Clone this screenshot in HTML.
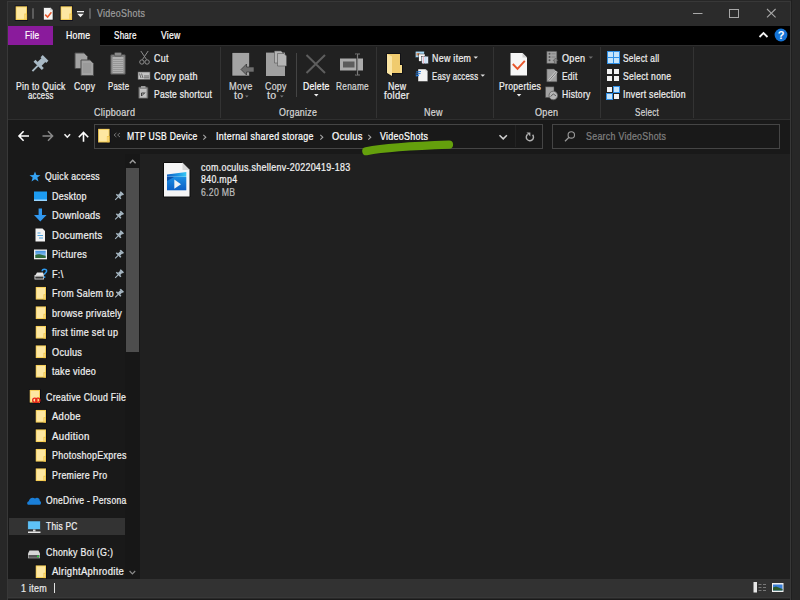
<!DOCTYPE html>
<html><head><meta charset="utf-8">
<style>
*{margin:0;padding:0;box-sizing:border-box}
html,body{width:800px;height:600px;overflow:hidden;background:#272727;font-family:"Liberation Sans",sans-serif}
.a{position:absolute}
.t{position:absolute;font-size:11px;line-height:11px;white-space:nowrap;transform-origin:0 0;-webkit-text-stroke:0.25px currentColor;letter-spacing:0.35px}
svg{position:absolute;overflow:visible}
</style></head><body>
<!-- window frame -->
<div class="a" style="left:7px;top:1px;width:784px;height:610px;background:#383838"></div>
<!-- title bar -->
<div class="a" style="left:8px;top:2px;width:782px;height:24px;background:#2b2b2b"></div>
<!-- tab strip -->
<div class="a" style="left:8px;top:26px;width:782px;height:19px;background:#000"></div>
<div class="a" style="left:8px;top:26px;width:45px;height:19px;background:#8a1b9c"></div>
<div class="a" style="left:53px;top:26px;width:47px;height:20px;background:#212121"></div>
<!-- ribbon -->
<div class="a" style="left:8px;top:45px;width:782px;height:75px;background:#212121"></div>
<div class="a" style="left:100px;top:45px;width:690px;height:1px;background:#2e2e2e"></div>
<div class="a" style="left:8px;top:119px;width:782px;height:1px;background:#2f2f2f"></div>
<!-- group separators -->
<div class="a" style="left:220px;top:47px;width:1px;height:71px;background:#333"></div>
<div class="a" style="left:376px;top:47px;width:1px;height:71px;background:#333"></div>
<div class="a" style="left:493px;top:47px;width:1px;height:71px;background:#333"></div>
<div class="a" style="left:600px;top:47px;width:1px;height:71px;background:#333"></div>
<div class="a" style="left:693px;top:47px;width:1px;height:71px;background:#333"></div>
<div class="a" style="left:296px;top:53px;width:1px;height:44px;background:#444"></div>
<!-- address row -->
<div class="a" style="left:8px;top:120px;width:782px;height:34px;background:#191919"></div>
<div class="a" style="left:94px;top:124px;width:449px;height:25px;border:1px solid #454545;background:#191919"></div>
<div class="a" style="left:515px;top:125px;width:1px;height:22px;background:#232323"></div>
<div class="a" style="left:552px;top:124px;width:228px;height:25px;border:1px solid #454545;background:#191919"></div>
<!-- nav pane -->
<div class="a" style="left:8px;top:154px;width:132px;height:425px;background:#191919"></div>
<div class="a" style="left:125px;top:154px;width:15px;height:425px;background:#171717"></div>
<div class="a" style="left:126px;top:168px;width:13px;height:184px;background:#4d4d4d"></div>
<div class="a" style="left:9px;top:518px;width:116px;height:17px;background:#333"></div>
<!-- content -->
<div class="a" style="left:140px;top:154px;width:650px;height:425px;background:#202020"></div>
<!-- status -->
<div class="a" style="left:8px;top:579px;width:782px;height:18px;background:#323232"></div>
<div class="a" style="left:8px;top:597px;width:782px;height:1px;background:#383838"></div><div class="a" style="left:8px;top:598px;width:782px;height:1px;background:#282828"></div><div class="a" style="left:8px;top:599px;width:782px;height:1px;background:#1a1a1a"></div>
<div class="a" style="left:54px;top:583px;width:1px;height:10px;background:#e0e0e0"></div>
<div class="a" style="left:791px;top:0px;width:1px;height:600px;background:#1f1f1f"></div>

<svg class="a" style="left:0;top:0" width="800" height="600" viewBox="0 0 800 600">
<defs>
<g id="fold">
 <rect x="-0.2" y="-0.5" width="13.1" height="15.3" fill="#0b0b1c"/>
 <rect x="0.6" y="0.3" width="11.5" height="13.7" fill="#f5cf55"/>
 <rect x="1.5" y="1.3" width="9.6" height="11.6" fill="#fde7a2"/>
 <rect x="9.4" y="7.6" width="2.7" height="6.1" fill="#efc246"/>
 <rect x="9.7" y="8.4" width="1.7" height="4.4" fill="#f8d878"/>
</g>
<g id="nfold">
 <rect x="0.4" y="-1.4" width="11.9" height="14.3" fill="#0b0b16"/>
 <rect x="1.2" y="-0.6" width="10.3" height="12.7" fill="#f5cf55"/>
 <rect x="2.1" y="0.4" width="8.4" height="10.6" fill="#fde7a2"/>
 <rect x="9" y="6.8" width="2.5" height="5.3" fill="#efc246"/>
 <rect x="9.3" y="7.6" width="1.5" height="3.6" fill="#f8d878"/>
</g>
<g id="pin">
 <g transform="rotate(45)">
  <rect x="-2.6" y="-6" width="5.2" height="2" fill="#a9bac6"/>
  <rect x="-1.8" y="-4.2" width="3.6" height="4" fill="#a9bac6"/>
  <rect x="-3.8" y="-0.6" width="7.6" height="1.8" fill="#a9bac6"/>
  <rect x="-0.6" y="1" width="1.2" height="5" fill="#a9bac6"/>
 </g>
</g>
</defs>
<!-- title bar -->
<use href="#fold" x="15" y="6"/>
<rect x="32" y="8" width="2" height="11" rx="1" fill="#5c5c5c"/>
<path d="M43.5 7.5 H50.5 L53 10 V20 H43.5 Z" fill="#f4f4f4" stroke="#151515" stroke-width="0.6"/>
<path d="M50.2 7.5 V10.3 H53" fill="#c8c8c8"/>
<path d="M45.2 14.6 L47.6 17 L51.4 12.2" fill="none" stroke="#e8572b" stroke-width="1.5"/>
<use href="#fold" x="60" y="6"/>
<rect x="77" y="11" width="7" height="1.3" fill="#f0f0f0"/>
<path d="M77.3 13.8 H83.7 L80.5 17.2 Z" fill="#f0f0f0"/>
<rect x="89" y="8" width="2" height="11" rx="1" fill="#5c5c5c"/>
<rect x="693" y="13" width="9.5" height="1" fill="#a8a8a8"/>
<rect x="729.5" y="9.5" width="9" height="8" fill="none" stroke="#a8a8a8" stroke-width="1"/>
<path d="M767 9 L775.6 17.4 M775.6 9 L767 17.4" stroke="#a8a8a8" stroke-width="1.05"/>
<!-- tab strip right -->
<path d="M759.5 37 L763.5 33 L767.5 37" fill="none" stroke="#f4f4f4" stroke-width="1.8"/>
<circle cx="781" cy="35" r="6.4" fill="#1473d6"/>
<text x="781" y="39.2" text-anchor="middle" font-family="Liberation Sans" font-weight="bold" font-size="11" fill="#fff">?</text>

<!-- ribbon: pin -->
<use href="#pin" transform="translate(39 64.5) scale(1.55)"/>
<!-- copy -->
<path d="M75 53 H84 L87.5 56.5 V68.5 H75 Z" fill="#a3a3a3" stroke="#4d4d4d" stroke-width="1"/>
<path d="M81 60 H90 L93.5 63.5 V75.5 H81 Z" fill="#a3a3a3" stroke="#4d4d4d" stroke-width="1"/>
<path d="M83 64 H91 M83 66 H91 M83 68 H91 M83 70 H91 M83 72 H91" stroke="#8d8d8d" stroke-width="0.8"/>
<!-- paste -->
<rect x="110.5" y="54.5" width="15" height="20" rx="1.5" fill="#7d7d7d" stroke="#444" stroke-width="1"/>
<rect x="112.5" y="57" width="11" height="16" fill="#b0b0b0"/>
<path d="M113 59.5 H123 M113 61.5 H123 M113 63.5 H123 M113 65.5 H123 M113 67.5 H123 M113 69.5 H123 M113 71.5 H123" stroke="#8f8f8f" stroke-width="0.8"/>
<rect x="114.5" y="52.5" width="7" height="3.5" rx="1" fill="#8a8a8a" stroke="#444" stroke-width="0.6"/>
<!-- cut -->
<path d="M140.8 51 L146.6 59.6 M148.2 51 L142.4 59.6" stroke="#8e8e8e" stroke-width="1" fill="none"/>
<circle cx="141.9" cy="62" r="2.2" fill="none" stroke="#8e8e8e" stroke-width="1"/>
<circle cx="147.1" cy="62" r="2.2" fill="none" stroke="#8e8e8e" stroke-width="1"/>
<!-- copy path -->
<rect x="138" y="72" width="12" height="7.5" fill="#c4c4c4" stroke="#5a5a5a" stroke-width="0.6"/>
<path d="M139.5 73.5 L141 78 M141.5 73.5 L143 78 M144 76 H149 M144 77.8 H149" stroke="#444" stroke-width="0.7"/>
<!-- paste shortcut -->
<rect x="138.5" y="87" width="9.5" height="11.5" rx="1" fill="#8a8a8a" stroke="#444" stroke-width="0.8"/>
<rect x="140" y="89" width="6.5" height="8.5" fill="#c2c2c2"/>
<rect x="141" y="86" width="4.5" height="2.2" fill="#9a9a9a"/>
<path d="M141.5 96 V93 H144.5 M141.8 95.8 L145 92.5" stroke="#333" stroke-width="0.9" fill="none"/>

<!-- move to -->
<rect x="232" y="52.6" width="17.6" height="23.4" fill="#a3a3a3" stroke="#111" stroke-width="0.6"/>
<path d="M241 69.5 L246.5 64 V67 H254 V72 H246.5 V75 Z" fill="#6f6f6f" stroke="#222" stroke-width="0.6"/>
<!-- copy to -->
<path d="M266 52.6 H285 V76 H266 Z" fill="#a0a0a0"/>
<path d="M274.5 51 H281 L283 53 V63 H274.5 Z" fill="#b5b5b5" stroke="#555" stroke-width="0.6"/>
<path d="M277.5 53.5 H284 L286.5 56 V66 H277.5 Z" fill="#b5b5b5" stroke="#555" stroke-width="0.6"/>
<!-- delete X -->
<path d="M306.5 55 L325 73 M325 55 L306.5 73" stroke="#5e5e5e" stroke-width="2"/>
<!-- rename -->
<rect x="340" y="58.5" width="23" height="12" fill="#ababab"/>
<rect x="343" y="61.5" width="11.5" height="6" fill="#5c5c5c"/>
<path d="M357.5 54 V75 M355 54 H360 M355 75 H360" stroke="#7a7a7a" stroke-width="1.2" fill="none"/>
<path d="M356.5 54 V75" stroke="#2a2a2a" stroke-width="0.6"/>

<!-- new folder -->
<path d="M386.3 53.3 H400.7 V64.3 H402.7 V73.7 H392.7 V76.8 L386.3 73.5 Z" fill="#0c0c12"/>
<rect x="387" y="54" width="13" height="19" fill="#f0cb6e"/>
<rect x="400" y="65" width="2" height="8" fill="#f6db8a"/>
<path d="M387 54 L392 56.5 V76 L387 73 Z" fill="#fae4a2"/>
<!-- new item -->
<rect x="415.3" y="51.2" width="9" height="6.3" fill="#a6d6f4" stroke="#111" stroke-width="0.4"/>
<rect x="416.5" y="53" width="3" height="2.5" fill="#d08a5a"/>
<rect x="418.8" y="54" width="6.2" height="7.3" fill="#f6f6f6" stroke="#111" stroke-width="0.4"/>
<rect x="421.7" y="56.2" width="6.7" height="7.6" fill="#d9e6f5" stroke="#111" stroke-width="0.4"/>
<path d="M423.5 56.5 V63.5" stroke="#f0b0c0" stroke-width="0.9"/>
<path d="M425.8 56.5 V63.5" stroke="#b9d6f2" stroke-width="0.9"/>
<!-- easy access -->
<path d="M418 69 H425.5 L427.8 71.3 V81.5 H418 Z" fill="#f3f3f3" stroke="#111" stroke-width="0.4"/>
<path d="M425.5 69 V71.3 H427.8 Z" fill="#cfcfcf"/>
<path d="M416 72 L421 71.5 M415.6 74 L420.5 73.5 M415.8 75.8 L419 75.4" stroke="#2a7bd6" stroke-width="1.2"/>
<!-- dropdown arrows -->
<path d="M473.5 56.5 H478 L475.75 58.8 Z" fill="#e0e0e0"/>
<path d="M480.5 74.5 H485 L482.75 76.8 Z" fill="#e0e0e0"/>
<path d="M588.5 56.5 H593 L590.75 58.8 Z" fill="#6c6c6c"/>
<path d="M314 94 H318.5 L316.25 96.6 Z" fill="#f0f0f0"/>
<path d="M516.8 94 H521.3 L519 96.6 Z" fill="#f0f0f0"/>
<path d="M245 95.5 H248.6 L246.8 97.4 Z" fill="#777"/>
<path d="M280 95.5 H283.6 L281.8 97.4 Z" fill="#777"/>

<!-- properties -->
<path d="M510.5 53 H522.5 L527 57.5 V75.5 H510.5 Z" fill="#f6f6f6"/>
<path d="M522.5 53 V57.5 H527 Z" fill="#cfcfcf"/>
<path d="M512.8 64 L517.5 68.8 L524.8 60.8" fill="none" stroke="#e8552a" stroke-width="1.9"/>
<!-- open -->
<path d="M546.8 51.3 H556.8 V63.4 H546.8 Z" fill="#a2a2a2" stroke="#4a4a4a" stroke-width="0.5"/>
<circle cx="549.5" cy="53.8" r="1" fill="#555"/><circle cx="549.5" cy="57" r="1" fill="#555"/><circle cx="549.5" cy="60.2" r="1" fill="#555"/>
<path d="M551.5 53.8 H555.5 M551.5 57 H555.5" stroke="#7a7a7a" stroke-width="0.8"/>
<path d="M554.5 63.8 V60.8 H553 L555.6 58 L558.2 60.8 H556.7 V63.8 Z" fill="#8a8a8a" stroke="#3a3a3a" stroke-width="0.4"/>
<!-- edit -->
<path d="M546.8 69 H554 L557 72 V81.8 H546.8 Z" fill="#a2a2a2" stroke="#4a4a4a" stroke-width="0.5"/>
<path d="M549 80.5 L556.8 71.5" stroke="#d0d0d0" stroke-width="2.2"/>
<path d="M549 80.5 L556.8 71.5" stroke="#777" stroke-width="1"/>
<!-- history -->
<path d="M545.5 86.8 H554 V97.5 H545.5 Z" fill="#a2a2a2" stroke="#4a4a4a" stroke-width="0.5"/>
<circle cx="553.3" cy="95.5" r="4.3" fill="#b5b5b5" stroke="#5a5a5a" stroke-width="0.8"/>
<path d="M550.5 96.5 L553.3 94 L556 95.8" stroke="#555" stroke-width="0.9" fill="none"/>
<!-- select all -->
<rect x="607" y="51" width="13" height="13" fill="#2f8fe6"/>
<rect x="608" y="52" width="5" height="5" fill="#c5e4fb"/>
<rect x="614" y="52" width="5" height="5" fill="#c5e4fb"/>
<rect x="608" y="58" width="5" height="5" fill="#c5e4fb"/>
<rect x="614" y="58" width="5" height="5" fill="#c5e4fb"/>
<!-- select none -->
<rect x="607" y="69" width="5" height="5" fill="#f2f2f2"/>
<rect x="614" y="69" width="5" height="5" fill="#f2f2f2"/>
<rect x="607" y="76" width="5" height="5" fill="#f2f2f2"/>
<rect x="614" y="76" width="5" height="5" fill="#f2f2f2"/>
<!-- invert -->
<rect x="607" y="87" width="5" height="5" fill="#f2f2f2"/>
<rect x="613" y="86" width="7" height="7" fill="#2f8fe6"/><rect x="614" y="87" width="5" height="5" fill="#c5e4fb"/>
<rect x="606" y="93" width="7" height="7" fill="#2f8fe6"/><rect x="607" y="94" width="5" height="5" fill="#c5e4fb"/>
<rect x="614" y="94" width="5" height="5" fill="#f2f2f2"/>

<!-- address row -->
<path d="M19 136 H29 M23.6 131.3 L19 136 L23.6 140.7" stroke="#fff" stroke-width="1.6" fill="none"/>
<path d="M42.5 136 H52.5 M48 131.3 L52.6 136 L48 140.7" stroke="#8a8a8a" stroke-width="1.5" fill="none"/>
<path d="M64.5 134.3 L67.3 137.2 L70.1 134.3" stroke="#f0f0f0" stroke-width="1.6" fill="none"/>
<path d="M83.5 141.8 V132.6 M78.8 137.2 L83.5 132.5 L88.2 137.2" stroke="#fff" stroke-width="1.6" fill="none"/>
<use href="#fold" x="97.5" y="128.5" transform="scale(1)"/>
<path d="M116.4 133 L114 135 L116.4 137 M120 133 L117.6 135 L120 137" stroke="#7a7a7a" stroke-width="0.9" fill="none"/>
<path d="M203.3 134.8 L205.8 137.2 L203.3 139.6" stroke="#a8a8a8" stroke-width="1.1" fill="none"/>
<path d="M320.3 134.8 L322.8 137.2 L320.3 139.6" stroke="#a8a8a8" stroke-width="1.1" fill="none"/>
<path d="M368.3 134.8 L370.8 137.2 L368.3 139.6" stroke="#a8a8a8" stroke-width="1.1" fill="none"/>
<path d="M499.5 135.2 L503.2 138.9 L506.9 135.2" stroke="#d0d0d0" stroke-width="1.5" fill="none"/>
<path d="M532.6 134.8 A3.6 3.6 0 1 1 527.7 134.3" stroke="#b0b0b0" stroke-width="1.45" fill="none"/>
<path d="M526.5 132.5 H530.4 V136.4 Z" fill="#b0b0b0"/>
<circle cx="571.3" cy="134.9" r="3.2" stroke="#9a9a9a" stroke-width="1.1" fill="none"/>
<path d="M569 137.3 L565 141.2" stroke="#9a9a9a" stroke-width="1.3"/>
<!-- green marker -->
<path d="M366.3 151.2 C 385 147.6, 410 146, 449 144.7" stroke="#64a00c" stroke-width="8.2" stroke-linecap="round" fill="none"/>

<!-- nav icons -->
<path d="M35 171.5 L36.4 175 L40.5 175.2 L37.3 177.6 L38.5 181.4 L35 179.2 L31.5 181.4 L32.7 177.6 L29.5 175.2 L33.6 175 Z" fill="#35a3f3"/>
<rect x="34" y="191.5" width="13" height="9.5" fill="#1d9bf0"/>
<rect x="34" y="199.5" width="13" height="1.5" fill="#9ad6ff"/>
<path d="M38.6 208.6 H42 V215 H46.6 L40.3 221.4 L34 215 H38.6 Z" fill="#3198ef"/>
<path d="M35.5 228.5 H42.5 L45 231 V241.5 H35.5 Z" fill="#f3f3f3"/>
<path d="M37.5 233 H40.5 M37.5 235.5 H43 M39 238 H43" stroke="#4fa4e0" stroke-width="1.1"/>
<rect x="34" y="249.5" width="13" height="9.8" fill="#ececec"/>
<defs><linearGradient id="sky" x1="0" y1="0" x2="0" y2="1"><stop offset="0" stop-color="#3d8fe0"/><stop offset="1" stop-color="#b9dcf5"/></linearGradient></defs>
<rect x="35.3" y="250.8" width="10.4" height="7.2" fill="url(#sky)"/>
<path d="M35.3 258 V255 C 38 253.5, 41 254.5, 45.7 255.8 V258 Z" fill="#2f6a3a"/>
<path d="M35.5 275 L37 272.5 H43 L44 275 Z" fill="#e6e6e6"/>
<rect x="34.5" y="275" width="9.5" height="4.5" rx="0.6" fill="#d8d8d8"/>
<rect x="35.3" y="276.6" width="8" height="2" fill="#3a3a3a"/>
<path d="M42.2 271.2 C 42.2 268.6, 46.6 268.6, 46.6 271 C 46.6 272.8, 44.4 272.8, 44.4 274.8" stroke="#2e9bf0" stroke-width="1.5" fill="none"/>
<rect x="43.7" y="276.3" width="1.6" height="1.6" fill="#2e9bf0"/>
<use href="#nfold" x="34.5" y="287.5"/>
<use href="#nfold" x="34.5" y="307"/>
<use href="#nfold" x="34.5" y="326.5"/>
<use href="#nfold" x="34.5" y="346"/>
<use href="#nfold" x="34.5" y="365.5"/>
<use href="#nfold" x="28.5" y="390.5"/>
<circle cx="34.8" cy="400.3" r="2.1" fill="none" stroke="#e8231a" stroke-width="1.3"/>
<circle cx="37.8" cy="400.3" r="2.1" fill="none" stroke="#e8231a" stroke-width="1.3"/>
<use href="#nfold" x="34.5" y="410.5"/>
<use href="#nfold" x="34.5" y="430"/>
<use href="#nfold" x="34.5" y="449.5"/>
<use href="#nfold" x="34.5" y="469"/>
<path d="M28.5 504.8 C 26.8 504.8 26.6 501.5 28.8 501.2 C 29 498.5 32.5 496.5 35 498.5 C 37 496.6 40.2 498.2 39.8 501 C 41.5 501.2 41.5 504.8 39.5 504.8 Z" fill="#1a7fd8"/>
<rect x="27.8" y="521" width="12.5" height="8.5" fill="#5ec2f7" stroke="#2a2a2a" stroke-width="0.5"/>
<rect x="33" y="529.5" width="2.5" height="2" fill="#d8d8d8"/>
<rect x="28" y="531.5" width="12.5" height="1.5" fill="#e6e6e6"/>
<path d="M29.5 550.5 H38.5 L40 553.5 V558.3 H28 V553.5 Z" fill="#d6d6d6"/>
<rect x="28.5" y="555" width="11" height="2.8" fill="#555"/>
<rect x="37" y="555.6" width="2" height="1.6" fill="#2ecc40"/>
<use href="#nfold" x="34.5" y="566"/>
<!-- pins -->
<use href="#pin" transform="translate(118.8 196.3) scale(0.85)"/>
<use href="#pin" transform="translate(118.8 215.8) scale(0.85)"/>
<use href="#pin" transform="translate(118.8 235.3) scale(0.85)"/>
<use href="#pin" transform="translate(118.8 254.8) scale(0.85)"/>
<use href="#pin" transform="translate(118.8 274.3) scale(0.85)"/>
<use href="#pin" transform="translate(118.8 293.8) scale(0.85)"/>
<!-- scrollbar arrows -->
<path d="M129.8 163.3 L132.7 160.3 L135.6 163.3" stroke="#9c9c9c" stroke-width="1.4" fill="none"/>
<path d="M129.6 571 L132.4 573.8 L135.2 571" stroke="#8a8a8a" stroke-width="1.2" fill="none"/>

<!-- content file icon -->
<defs>
<linearGradient id="clap" x1="0" y1="0" x2="1" y2="0"><stop offset="0" stop-color="#0f5fc0"/><stop offset="0.5" stop-color="#1a8fe0"/><stop offset="1" stop-color="#36c8f4"/></linearGradient>
<linearGradient id="vbody" x1="0" y1="0" x2="0" y2="1"><stop offset="0" stop-color="#1b8ee2"/><stop offset="1" stop-color="#0b5fc6"/></linearGradient>
</defs>
<path d="M163.5 162.5 H182.5 L190 170 V197 H163.5 Z" fill="#f5f5f5" stroke="#0b0b0b" stroke-width="1"/>
<path d="M182.5 162.5 V170 H190 Z" fill="#d6d6d6"/>
<path d="M167 174.5 L186.3 172 V176.8 H167 Z" fill="url(#clap)"/>
<rect x="167" y="177" width="19.3" height="13.3" fill="url(#vbody)"/>
<path d="M167 177 L174 177 L167 181 Z" fill="#0a4fa8"/>
<path d="M174.3 179.5 L181 184.2 L174.3 188.8 Z" fill="#eef2f6"/>
<!-- status bar icons -->
<rect x="753.5" y="582" width="3.5" height="10.5" fill="#e8e8e8"/>
<path d="M758.5 584.5 H761.5 M763 584.5 H766 M758.5 587.5 H761.5 M763 587.5 H766 M758.5 590.5 H761.5 M763 590.5 H766" stroke="#777" stroke-width="1"/>
<rect x="772" y="583" width="11.5" height="9" fill="#f0f0f0"/>
<rect x="773" y="584.5" width="9.5" height="6" fill="#3a7fd8"/>
<path d="M773 590.5 V587.5 L776 586.5 L782.5 589 V590.5 Z" fill="#2d5b2d"/>
</svg>

<div class="t" style="left:96.60px;top:9.30px;color:#9d9d9d;transform:scale(0.8094,0.93)">VideoShots</div>
<div class="t" style="left:24.60px;top:30.80px;color:#ffffff;transform:scale(0.7525,0.93)">File</div>
<div class="t" style="left:65.60px;top:30.80px;color:#ffffff;transform:scale(0.7938,0.93)">Home</div>
<div class="t" style="left:113.60px;top:30.80px;color:#ffffff;transform:scale(0.7326,0.93)">Share</div>
<div class="t" style="left:160.60px;top:30.80px;color:#ffffff;transform:scale(0.7818,0.93)">View</div>
<div class="t" style="left:15.60px;top:81.80px;color:#f0f0f0;transform:scale(0.7807,0.93)">Pin to Quick</div>
<div class="t" style="left:27.60px;top:91.30px;color:#f0f0f0;transform:scale(0.7077,0.93)">access</div>
<div class="t" style="left:73.60px;top:81.80px;color:#f0f0f0;transform:scale(0.7852,0.93)">Copy</div>
<div class="t" style="left:107.60px;top:81.80px;color:#f0f0f0;transform:scale(0.7115,0.93)">Paste</div>
<div class="t" style="left:153.60px;top:53.80px;color:#f0f0f0;transform:scale(0.8062,0.93)">Cut</div>
<div class="t" style="left:153.60px;top:72.30px;color:#f0f0f0;transform:scale(0.8218,0.93)">Copy path</div>
<div class="t" style="left:153.60px;top:89.80px;color:#f0f0f0;transform:scale(0.7741,0.93)">Paste shortcut</div>
<div class="t" style="left:93.60px;top:108.30px;color:#d6d6d6;transform:scale(0.8200,0.93)">Clipboard</div>
<div class="t" style="left:228.64px;top:81.80px;color:#d8d8d8;transform:scale(0.8417,0.93)">Move</div>
<div class="t" style="left:233.60px;top:90.80px;color:#d8d8d8;transform:scale(0.9675,0.93)">to</div>
<div class="t" style="left:264.60px;top:81.80px;color:#d8d8d8;transform:scale(0.8043,0.93)">Copy</div>
<div class="t" style="left:266.60px;top:90.80px;color:#d8d8d8;transform:scale(0.9675,0.93)">to</div>
<div class="t" style="left:302.65px;top:81.80px;color:#ffffff;transform:scale(0.7861,0.93)">Delete</div>
<div class="t" style="left:335.69px;top:81.80px;color:#d8d8d8;transform:scale(0.7537,0.93)">Rename</div>
<div class="t" style="left:278.60px;top:108.30px;color:#d6d6d6;transform:scale(0.8064,0.93)">Organize</div>
<div class="t" style="left:387.60px;top:81.80px;color:#f0f0f0;transform:scale(0.7961,0.93)">New</div>
<div class="t" style="left:383.60px;top:90.80px;color:#f0f0f0;transform:scale(0.8600,0.93)">folder</div>
<div class="t" style="left:431.60px;top:54.00px;color:#f0f0f0;transform:scale(0.8077,0.93)">New item</div>
<div class="t" style="left:431.60px;top:72.00px;color:#f0f0f0;transform:scale(0.7064,0.93)">Easy access</div>
<div class="t" style="left:423.65px;top:108.30px;color:#d6d6d6;transform:scale(0.8147,0.93)">New</div>
<div class="t" style="left:498.64px;top:81.80px;color:#f0f0f0;transform:scale(0.7852,0.93)">Properties</div>
<div class="t" style="left:561.60px;top:54.00px;color:#f0f0f0;transform:scale(0.8242,0.93)">Open</div>
<div class="t" style="left:561.60px;top:72.00px;color:#f0f0f0;transform:scale(0.7618,0.93)">Edit</div>
<div class="t" style="left:561.60px;top:89.80px;color:#f0f0f0;transform:scale(0.7794,0.93)">History</div>
<div class="t" style="left:534.60px;top:108.30px;color:#d6d6d6;transform:scale(0.8242,0.93)">Open</div>
<div class="t" style="left:622.66px;top:54.00px;color:#f0f0f0;transform:scale(0.7551,0.93)">Select all</div>
<div class="t" style="left:622.65px;top:72.00px;color:#f0f0f0;transform:scale(0.7789,0.93)">Select none</div>
<div class="t" style="left:622.71px;top:89.80px;color:#f0f0f0;transform:scale(0.7896,0.93)">Invert selection</div>
<div class="t" style="left:634.67px;top:108.30px;color:#d6d6d6;transform:scale(0.7371,0.93)">Select</div>
<div class="t" style="left:126.65px;top:131.80px;color:#ffffff;transform:scale(0.7818,0.93)">MTP USB Device</div>
<div class="t" style="left:215.65px;top:131.80px;color:#ffffff;transform:scale(0.8059,0.93)">Internal shared storage</div>
<div class="t" style="left:331.60px;top:131.80px;color:#ffffff;transform:scale(0.8464,0.93)">Oculus</div>
<div class="t" style="left:379.63px;top:131.80px;color:#ffffff;transform:scale(0.8094,0.93)">VideoShots</div>
<div class="t" style="left:585.87px;top:132.10px;color:#808080;transform:scale(0.8037,0.93)">Search VideoShots</div>
<div class="t" style="left:200.60px;top:162.80px;color:#f2f2f2;transform:scale(0.8086,0.93)">com.oculus.shellenv-20220419-183</div>
<div class="t" style="left:200.60px;top:175.30px;color:#f2f2f2;transform:scale(0.8050,0.93)">840.mp4</div>
<div class="t" style="left:200.60px;top:188.10px;color:#bdbdbd;transform:scale(0.7903,0.93)">6.20 MB</div>
<div class="t" style="left:44.64px;top:172.30px;color:#f0f0f0;transform:scale(0.7883,0.93)">Quick access</div>
<div class="t" style="left:51.60px;top:191.80px;color:#f0f0f0;transform:scale(0.8142,0.93)">Desktop</div>
<div class="t" style="left:51.60px;top:211.30px;color:#f0f0f0;transform:scale(0.8424,0.93)">Downloads</div>
<div class="t" style="left:51.60px;top:230.80px;color:#f0f0f0;transform:scale(0.8600,0.93)">Documents</div>
<div class="t" style="left:51.60px;top:250.30px;color:#f0f0f0;transform:scale(0.8243,0.93)">Pictures</div>
<div class="t" style="left:51.60px;top:269.80px;color:#f0f0f0;transform:scale(0.8257,0.93)">F:\</div>
<div class="t" style="left:51.60px;top:289.30px;color:#f0f0f0;transform:scale(0.8079,0.93)">From Salem to</div>
<div class="t" style="left:51.60px;top:308.80px;color:#f0f0f0;transform:scale(0.8247,0.93)">browse privately</div>
<div class="t" style="left:51.60px;top:328.30px;color:#f0f0f0;transform:scale(0.8226,0.93)">first time set up</div>
<div class="t" style="left:51.60px;top:347.80px;color:#f0f0f0;transform:scale(0.8323,0.93)">Oculus</div>
<div class="t" style="left:51.60px;top:367.30px;color:#f0f0f0;transform:scale(0.8226,0.93)">take video</div>
<div class="t" style="left:45.60px;top:392.80px;color:#f0f0f0;transform:scale(0.8000,0.93)">Creative Cloud File</div>
<div class="t" style="left:51.60px;top:412.30px;color:#f0f0f0;transform:scale(0.8600,0.93)">Adobe</div>
<div class="t" style="left:51.60px;top:431.80px;color:#f0f0f0;transform:scale(0.8839,0.93)">Audition</div>
<div class="t" style="left:51.60px;top:451.30px;color:#f0f0f0;transform:scale(0.8110,0.93)">PhotoshopExpres</div>
<div class="t" style="left:51.60px;top:470.80px;color:#f0f0f0;transform:scale(0.8017,0.93)">Premiere Pro</div>
<div class="t" style="left:45.60px;top:496.30px;color:#f0f0f0;transform:scale(0.7779,0.93)">OneDrive - Persona</div>
<div class="t" style="left:45.60px;top:521.80px;color:#f0f0f0;transform:scale(0.7617,0.93)">This PC</div>
<div class="t" style="left:45.60px;top:547.80px;color:#f0f0f0;transform:scale(0.8055,0.93)">Chonky Boi (G:)</div>
<div class="t" style="left:51.60px;top:567.30px;color:#f0f0f0;transform:scale(0.8600,0.93)">AlrightAphrodite</div>
<div class="t" style="left:20.60px;top:584.30px;color:#e8e8e8;transform:scale(0.8125,0.93)">1 item</div>
</body></html>
